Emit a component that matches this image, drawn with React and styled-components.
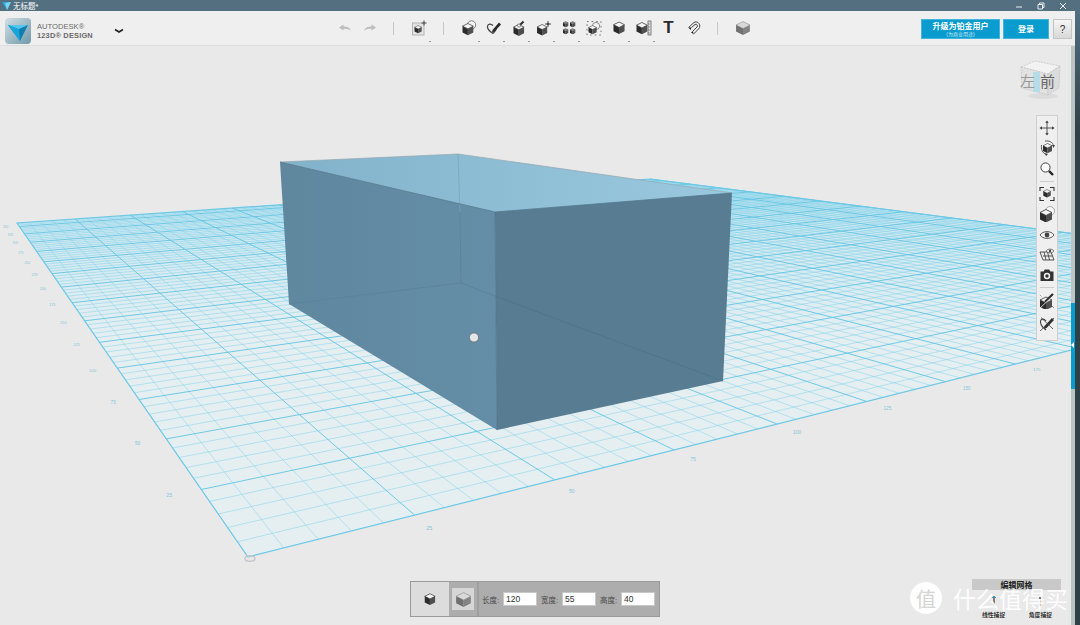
import React from "react";
import styled, { createGlobalStyle } from "styled-components";

const GlobalStyle = createGlobalStyle`
  html, body { margin: 0; padding: 0; overflow: hidden; }
  body { font-family: "Liberation Sans", "Noto Sans CJK SC", sans-serif; }
`;

const Shell = styled.div`
  width: 1080px;
  height: 625px;
  display: flex;
  flex-direction: column;
  background: #e9e9e9;
`;

const TitleBar = styled.div`
  height: 11px;
  flex: none;
  display: flex;
  align-items: center;
  background: #536f80;
  color: #fff;
  font-size: 7.5px;
`;

const TitleIcon = styled.svg`
  width: 9px;
  height: 8px;
  margin: 0 2px 0 2px;
`;

const WindowControls = styled.div`
  margin-left: auto;
  display: flex;
  align-items: center;
  gap: 14px;
  padding-right: 13px;
`;

const Body = styled.div`
  flex: 1;
  min-height: 0;
  display: flex;
`;

const Column = styled.div`
  flex: 1;
  min-width: 0;
  display: flex;
  flex-direction: column;
`;

const EdgeStrip = styled.div`
  width: 5px;
  flex: none;
  background: linear-gradient(#536f80 0, #2f4148 120px);
`;

const Header = styled.div`
  height: 34px;
  flex: none;
  display: flex;
  align-items: center;
  background: #efefef;
  border-bottom: 1px solid #dddddd;
`;

const Brand = styled.div`
  width: 332px;
  height: 100%;
  flex: none;
  box-sizing: border-box;
  padding: 5px 0 0 5px;
  display: flex;
  align-items: center;
  gap: 6px;
`;

const BrandText = styled.div`
  width: 71px;
  color: #6a6a6a;
  line-height: 9px;
`;

const BrandTop = styled.div`
  font-size: 7.6px;
`;

const BrandBottom = styled.div`
  font-size: 7.4px;
  font-weight: bold;
  letter-spacing: 0.2px;
`;

const Toolbar = styled.div`
  display: flex;
  align-items: center;
  height: 100%;
`;

const ToolSlot = styled.div`
  position: relative;
  width: 25px;
  height: 100%;
  display: flex;
  align-items: center;
  justify-content: center;

  ${({ $more }) =>
    $more &&
    `&::after {
      content: "";
      position: absolute;
      right: 1px;
      bottom: 3px;
      width: 2px;
      height: 1px;
      background: #9a9a9a;
    }`}
`;

const TextTool = styled.span`
  font-family: "Liberation Sans", sans-serif;
  font-weight: bold;
  font-size: 17px;
  color: #2b2b2b;
`;

const ToolDivider = styled.div`
  width: 1px;
  height: 13px;
  margin: 0 12.5px 0 11px;
  background: #c6c6c6;
`;

const AccountArea = styled.div`
  margin-left: auto;
  display: flex;
  align-items: center;
  gap: 3px;
  padding: 2px 3px 0 0;
`;

const BlueButton = styled.div`
  width: ${({ $w }) => $w}px;
  height: 20px;
  box-sizing: border-box;
  display: flex;
  flex-direction: column;
  align-items: center;
  justify-content: center;
  background: #0a9ccf;
  border: 1px solid #43b4dc;
  color: #fff;
  font-weight: bold;
  font-size: 8px;
  line-height: 9px;
`;

const SubLabel = styled.span`
  font-size: 5px;
  font-weight: normal;
  line-height: 6px;
  color: #cfeaf5;
`;

const HelpButton = styled.div`
  width: 19px;
  height: 20px;
  box-sizing: border-box;
  margin-left: 1px;
  display: flex;
  align-items: center;
  justify-content: center;
  background: linear-gradient(#f6f6f6, #d8d8d8);
  border: 1px solid #c4c4c4;
  color: #333;
  font-size: 10px;
`;

const Workspace = styled.div`
  flex: 1;
  min-height: 0;
  display: flex;
`;

const Viewport = styled.div`
  position: relative;
  flex: 1;
  min-width: 0;
  overflow: hidden;
  background: #e9e9e9;
`;

const Scene = styled.svg`
  display: block;
  width: 1071px;
  height: 579px;
`;

const PanelHandle = styled.div`
  width: 4px;
  flex: none;
  display: flex;
  flex-direction: column;
  background: #bcc3c5;
`;

const HandleBlue = styled.div`
  position: relative;
  margin-top: 257px;
  height: 86px;
  background: #0a9ccf;

  &::after {
    content: "";
    position: absolute;
    left: 0;
    top: 39px;
    border-style: solid;
    border-width: 3px 3px 3px 0;
    border-color: transparent #fff transparent transparent;
  }
`;

const ViewCube = styled.svg`
  position: absolute;
  left: 1017px;
  top: 12px;
  width: 46px;
  height: 46px;
`;

const NavBar = styled.div`
  position: absolute;
  left: 1036px;
  top: 69px;
  width: 22px;
  height: 226px;
  box-sizing: border-box;
  padding-top: 2px;
  display: flex;
  flex-direction: column;
  align-items: center;
  background: #efefef;
  border: 1px solid #cfcfcf;
`;

const NavSlot = styled.div`
  width: 20px;
  height: ${({ $h }) => $h || 20.3}px;
  flex: none;
  display: flex;
  align-items: center;
  justify-content: center;
`;

const NavDivider = styled.div`
  width: 14px;
  height: 1px;
  flex: none;
  margin: 2px 0;
  background: #cdcdcd;
`;

const DimensionPanel = styled.div`
  position: absolute;
  left: 410px;
  bottom: 8px;
  width: 250px;
  height: 36px;
  box-sizing: border-box;
  display: flex;
  align-items: center;
  background: #adadad;
  border: 1px solid #9a9a9a;
`;

const ModeCell = styled.div`
  width: 38px;
  height: 100%;
  flex: none;
  display: flex;
  align-items: center;
  justify-content: center;
  background: #dcdcdc;
`;

const ModeCellActive = styled.div`
  width: 22px;
  height: 22px;
  flex: none;
  margin: 0 3px;
  display: flex;
  align-items: center;
  justify-content: center;
  background: #d6d6d6;
`;

const PanelRule = styled.div`
  width: 2px;
  height: 100%;
  flex: none;
  margin-right: 3px;
  background: #9f9f9f;
`;

const FieldGroup = styled.div`
  display: flex;
  align-items: center;
  gap: 4px;
  margin-right: 4px;
`;

const FieldLabel = styled.span`
  font-size: 7.5px;
  width: 17px;
  color: #4a4a4a;
  white-space: nowrap;
`;

const FieldInput = styled.div`
  width: 34px;
  height: 14px;
  box-sizing: border-box;
  padding-left: 2px;
  display: flex;
  align-items: center;
  background: #fff;
  border: 1px solid #c8c8c8;
  color: #333;
  font-size: 8.5px;
`;

const GridPanel = styled.div`
  position: absolute;
  left: 972px;
  top: 533px;
  width: 89px;
  display: flex;
  flex-direction: column;
  align-items: center;
`;

const GridPanelTitle = styled.div`
  width: 100%;
  height: 11px;
  display: flex;
  align-items: center;
  justify-content: center;
  background: #c9c9c9;
  color: #222;
  font-size: 8px;
  font-weight: bold;
`;

const SnapRow = styled.div`
  width: 100%;
  display: flex;
  justify-content: space-between;
  margin-top: 5px;
  padding: 0 9px 0 10px;
  box-sizing: border-box;
`;

const SnapItem = styled.div`
  display: flex;
  flex-direction: column;
  align-items: center;
  gap: 3px;
  color: #333;
  font-size: 5.8px;
  font-weight: bold;
  white-space: nowrap;
`;

const Watermark = styled.div`
  position: absolute;
  left: 910px;
  top: 536px;
  display: flex;
  align-items: center;
  gap: 11px;
  color: rgba(255, 255, 255, 0.95);
`;

const WatermarkBadge = styled.div`
  width: 32px;
  height: 32px;
  border-radius: 50%;
  display: flex;
  align-items: center;
  justify-content: center;
  background: rgba(255, 255, 255, 0.94);
  color: #d4d4d4;
  font-size: 20px;
`;

const WatermarkText = styled.div`
  font-family: "Noto Sans CJK SC", sans-serif;
  font-size: 23px;
  line-height: 28px;
`;

// grid projection, corners measured off the picture
const P00 = [248, 557];
const P10 = [1378, 273];
const P11 = [650, 179];
const P01 = [17, 223];
const NX = 15;
const NY = 14.5;

const dx1 = P10[0] - P11[0];
const dy1 = P10[1] - P11[1];
const dx2 = P01[0] - P11[0];
const dy2 = P01[1] - P11[1];
const sx = P00[0] - P10[0] + P11[0] - P01[0];
const sy = P00[1] - P10[1] + P11[1] - P01[1];
const det = dx1 * dy2 - dx2 * dy1;
const G = (sx * dy2 - dx2 * sy) / det;
const H = (dx1 * sy - sx * dy1) / det;

const project = (u, v) => {
  const w = G * u + H * v + 1;
  const x = (P10[0] - P00[0] + G * P10[0]) * u + (P01[0] - P00[0] + H * P01[0]) * v + P00[0];
  const y = (P10[1] - P00[1] + G * P10[1]) * u + (P01[1] - P00[1] + H * P01[1]) * v + P00[1];
  return [x / w, y / w, w];
};

const seg = (a, b) => `M${a[0].toFixed(1)} ${a[1].toFixed(1)}L${b[0].toFixed(1)} ${b[1].toFixed(1)}`;

const buildGrid = () => {
  let minor = "";
  let major = "";
  for (let i = 1; i <= NX * 5; i++) {
    const u = i / (NX * 5);
    const d = seg(project(u, 0), project(u, 1));
    if (i % 5 === 0) major += d;
    else minor += d;
  }
  for (let j = 1; j <= Math.floor(NY * 5); j++) {
    const v = j / (NY * 5);
    const d = seg(project(0, v), project(1, v));
    if (j % 5 === 0) major += d;
    else minor += d;
  }
  return { minor, major };
};

const GRID = buildGrid();
const NEAR_LABELS = [1, 2, 3, 4, 5, 6, 7].map((t) => ({ t, p: project(t / NX, -0.013) }));
const LEFT_LABELS = Array.from({ length: 14 }, (_, k) => k + 1).map((t) => ({ t, p: project(-0.012, t / NY) }));

const GridFloor = () => (
  <g>
    <polygon points={[P00, P10, P11, P01].map((p) => p.join(",")).join(" ")} fill="url(#floorFill)" />
    <path d={GRID.minor} stroke="#7fd0e8" strokeWidth="0.8" strokeOpacity="0.62" fill="none" />
    <path d={GRID.major} stroke="#62c4e3" strokeWidth="1" strokeOpacity="0.9" fill="none" />
    <polygon
      points={[P00, P10, P11, P01].map((p) => p.join(",")).join(" ")}
      stroke="#6cc8e6"
      strokeWidth="1.2"
      fill="none"
    />
    <ellipse cx="250" cy="558.5" rx="5" ry="2.8" fill="none" stroke="#c3c7c9" strokeWidth="1.4" />
    {NEAR_LABELS.map(({ t, p }) => (
      <text key={t} x={p[0]} y={p[1] + 2} fontSize={5.6 / Math.sqrt(p[2])} fill="#82c5da" textAnchor="middle">
        {t * 25}
      </text>
    ))}
    {LEFT_LABELS.map(({ t, p }) => (
      <text key={t} x={p[0]} y={p[1] + 1} fontSize={5.6 / Math.sqrt(p[2])} fill="#82c5da" textAnchor="end">
        {t * 25}
      </text>
    ))}
  </g>
);

const Box = () => (
  <g>
    <polygon points="280,162 458,154 732,193 495,212" fill="url(#boxTop)" />
    <polygon points="280,162 495,212 497,430 289,304" fill="url(#boxLeft)" />
    <polygon points="495,212 732,193 723,381 497,430" fill="#587c91" />
    <path d="M458 154L460 212" stroke="#78a5bc" strokeWidth="0.8" fill="none" />
    <path d="M460 212L461 283M461 283L289 304M461 283L495 296" stroke="#5a8299" strokeWidth="0.8" fill="none" />
    <path d="M495 296L723 381" stroke="#4f7286" strokeWidth="0.8" fill="none" />
    <path d="M280 162L458 154L732 193" stroke="#93a6b0" strokeWidth="0.7" fill="none" />
    <path d="M280 162L495 212L732 193M495 212L497 430" stroke="#54778b" strokeWidth="0.8" fill="none" />
    <circle cx="474" cy="337.5" r="4.6" fill="#e3e7e9" stroke="#6f7376" strokeWidth="0.9" />
  </g>
);

// small isometric cube used by most of the tool icons, drawn in a 16 box
const CubeMark = ({ x = 0, y = 0, s = 1, top = "#f4f4f4", left = "#2b2b2b", right = "#4f4f4f" }) => (
  <g transform={`translate(${x} ${y}) scale(${s})`}>
    <polygon points="6,0 12,3 6,6 0,3" fill={top} stroke="#333" strokeWidth="0.8" />
    <polygon points="0,3 6,6 6,13 0,10" fill={left} />
    <polygon points="12,3 6,6 6,13 12,10" fill={right} />
  </g>
);

const Icon = ({ children, size = 16 }) => (
  <svg width={size} height={size} viewBox="0 0 16 16">
    {children}
  </svg>
);

const UndoIcon = ({ flip }) => (
  <Icon>
    <g transform={flip ? "translate(16 0) scale(-1 1)" : undefined}>
      <path d="M2 7.5L6.5 4.5V6.5C10 6.5 13 7.5 14 11C12.5 9 10 8.7 6.5 8.7V10.5Z" fill="#bdbdbd" />
    </g>
  </Icon>
);

const AddIcon = () => (
  <Icon>
    <rect x="1.5" y="3" width="11.5" height="12" fill="#e4e4e4" stroke="#b4b4b4" />
    <CubeMark x={3.5} y={5.5} s={0.6} />
    <path d="M13 0.5V5.5M10.5 3H15.5" stroke="#444" strokeWidth="1" />
  </Icon>
);

const PrimitiveIcon = () => (
  <Icon>
    <circle cx="10.5" cy="5" r="4.2" fill="#f4f4f4" stroke="#666" strokeWidth="0.8" />
    <CubeMark x={1.5} y={3.5} s={0.9} />
  </Icon>
);

const SketchIcon = () => (
  <Icon>
    <path d="M7 13.5C3 11 1 8.5 1.5 6C2 3.5 5 3.5 7 5.5" fill="none" stroke="#444" strokeWidth="1.2" />
    <path d="M7 13.5C8.5 12 10 10 10.5 8.5" fill="none" stroke="#444" strokeWidth="1.2" />
    <path d="M6.5 10L13 2.5L15 4.5L8.5 11.5L6 12.5Z" fill="#2b2b2b" />
  </Icon>
);

const ConstructIcon = () => (
  <Icon>
    <CubeMark x={2.5} y={4.5} s={0.88} />
    <path d="M8 6L12.5 1.5" stroke="#2b2b2b" strokeWidth="2" />
    <circle cx="8" cy="5.5" r="1.6" fill="#f4f4f4" stroke="#444" strokeWidth="0.6" />
  </Icon>
);

const ModifyIcon = () => (
  <Icon>
    <CubeMark x={1} y={4.5} s={0.85} />
    <path d="M12 1V7M9 4H15" stroke="#333" strokeWidth="0.9" />
    <circle cx="12" cy="4" r="1.1" fill="#333" />
  </Icon>
);

const PatternIcon = () => (
  <Icon>
    {[
      [2, 1.5],
      [9, 1.5],
      [2, 8.5],
      [9, 8.5],
    ].map(([x, y]) => (
      <CubeMark key={`${x}-${y}`} x={x} y={y} s={0.44} top="#8a8a8a" />
    ))}
  </Icon>
);

const GroupIcon = () => (
  <Icon>
    <rect x="1" y="1.5" width="14" height="13.5" fill="none" stroke="#555" strokeWidth="0.8" strokeDasharray="1.6 3" />
    <circle cx="10" cy="6" r="3.6" fill="#f4f4f4" stroke="#666" strokeWidth="0.7" />
    <CubeMark x={2.5} y={5.5} s={0.68} />
  </Icon>
);

const CombineIcon = () => (
  <Icon>
    <CubeMark x={2.5} y={2} s={0.92} />
  </Icon>
);

const MeasureIcon = () => (
  <Icon>
    <CubeMark x={0.5} y={2.5} s={0.9} />
    <rect x="12" y="1" width="3" height="14" fill="#e2e2e2" stroke="#555" strokeWidth="0.7" />
    <path d="M12 4H14M12 7H14M12 10H14M12 13H14" stroke="#555" strokeWidth="0.6" />
  </Icon>
);

const MagnetIcon = () => (
  <Icon>
    <path
      d="M2.5 7.5L8 2.5C10.5 0.5 15 3.5 13.5 7.5C13 9 9 12.5 7.5 14"
      fill="none"
      stroke="#444"
      strokeWidth="1"
    />
    <path d="M5.5 7.5L9 4.5C11 3.5 12 5.5 11 7L7 11" fill="none" stroke="#444" strokeWidth="1" />
    <path d="M2.5 7.5L5.5 7.5L4.5 10Z M7 11L7.5 14L5 12.5Z" fill="#222" />
  </Icon>
);

const MaterialIcon = ({ size = 16 }) => (
  <Icon size={size}>
    <polygon points="8,1.5 15,5 8,8.5 1,5" fill="#d9d9d9" stroke="#8c8c8c" strokeWidth="0.6" />
    <polygon points="1,5 8,8.5 8,15 1,11.5" fill="#777" />
    <polygon points="15,5 8,8.5 8,15 15,11.5" fill="#8f8f8f" />
    <path d="M2 7L8 10L14 7M2 9L8 12L14 9M2 11L8 14L14 11" stroke="#5f5f5f" strokeWidth="0.5" fill="none" />
  </Icon>
);

const MoveIcon = () => (
  <Icon>
    <path d="M8 1.5V14.5M1.5 8H14.5" stroke="#444" strokeWidth="0.9" />
    <path d="M8 0.5L6.3 3H9.7ZM8 15.5L6.3 13H9.7ZM0.5 8L3 6.3V9.7ZM15.5 8L13 6.3V9.7Z" fill="#444" />
  </Icon>
);

const OrbitIcon = () => (
  <Icon>
    <CubeMark x={4} y={3.5} s={0.75} />
    <path d="M2.5 5C2 9 3 13 8 15" fill="none" stroke="#555" strokeWidth="1" />
    <path d="M6 1C10 0.5 14 2 14.5 6" fill="none" stroke="#555" strokeWidth="1" />
    <path d="M13 5L16 5L14.5 8ZM6 13L9 14L7 16Z" fill="#444" />
  </Icon>
);

const ZoomIcon = () => (
  <Icon>
    <circle cx="6.5" cy="6.5" r="4.6" fill="#fafafa" stroke="#444" strokeWidth="1" />
    <path d="M10 10L14 14" stroke="#222" strokeWidth="2.4" />
  </Icon>
);

const FitIcon = () => (
  <Icon>
    <path d="M1 5V1.5H5M11 1.5H15V5M15 11V14.5H11M5 14.5H1V11" fill="none" stroke="#333" strokeWidth="1.1" />
    <CubeMark x={4.3} y={3.5} s={0.62} />
  </Icon>
);

const ShadedIcon = () => (
  <Icon>
    <circle cx="11" cy="5" r="4.5" fill="#fafafa" stroke="#888" strokeWidth="0.7" />
    <CubeMark x={1} y={3.5} />
  </Icon>
);

const EyeIcon = () => (
  <Icon>
    <path d="M1 8C4 3.5 12 3.5 15 8C12 12.5 4 12.5 1 8Z" fill="#f7f7f7" stroke="#555" strokeWidth="1" />
    <circle cx="8" cy="8" r="2.4" fill="#444" />
  </Icon>
);

const GridEyeIcon = () => (
  <Icon>
    <path d="M1 5H12L15 13H4ZM4 9H13.5M5 5L7 13M8.5 5L10.5 13" fill="none" stroke="#444" strokeWidth="0.9" />
    <path d="M7 4C9 1.5 13 1.5 15 4C13 6.5 9 6.5 7 4Z" fill="#f7f7f7" stroke="#555" strokeWidth="0.8" />
    <circle cx="11" cy="4" r="1.2" fill="#444" />
  </Icon>
);

const CameraIcon = () => (
  <Icon>
    <path d="M1.5 4.5H4.5L5.8 2.5H10.2L11.5 4.5H14.5V14H1.5Z" fill="#333" />
    <circle cx="8" cy="9" r="3.2" fill="#f2f2f2" />
    <circle cx="8" cy="9" r="1.7" fill="#333" />
  </Icon>
);

const HideSolidIcon = () => (
  <Icon>
    <CubeMark x={1} y={4} />
    <path d="M6 9L14 1" stroke="#2b2b2b" strokeWidth="2.4" />
    <path d="M1 15L15 2" stroke="#efefef" strokeWidth="0.8" />
    <path d="M1.5 2.5L3 4M13 13L15 15" stroke="#444" strokeWidth="0.9" strokeDasharray="1 1" />
  </Icon>
);

const HideSketchIcon = () => (
  <Icon>
    <path d="M7 14C3 11 1 8 1.5 5C2.3 2.5 5 2.5 7 5" fill="none" stroke="#444" strokeWidth="1.1" />
    <path d="M5.5 10L13 2L15 4L7.5 12L5 13Z" fill="#2b2b2b" />
    <path d="M1 15L15 2" stroke="#444" strokeWidth="0.8" />
    <path d="M2 1.5L14 13" stroke="#444" strokeWidth="0.8" />
  </Icon>
);

const TOOLS_MAIN = [
  { key: "primitive", icon: <PrimitiveIcon />, more: true },
  { key: "sketch", icon: <SketchIcon />, more: true },
  { key: "construct", icon: <ConstructIcon />, more: true },
  { key: "modify", icon: <ModifyIcon />, more: true },
  { key: "pattern", icon: <PatternIcon />, more: true },
  { key: "group", icon: <GroupIcon />, more: true },
  { key: "combine", icon: <CombineIcon />, more: true },
  { key: "measure", icon: <MeasureIcon />, more: true },
];

const App = () => {
  return (
    <Shell>
      <GlobalStyle />
      <TitleBar>
        <TitleIcon viewBox="0 0 9 8">
          <polygon points="0,0 9,0 5,8" fill="#29a9dc" />
          <polygon points="3,1 9,0 5,8" fill="#7fd3f0" />
        </TitleIcon>
        无标题*
        <WindowControls>
          <svg width="8" height="8" viewBox="0 0 8 8">
            <path d="M1 5H7" stroke="#e8eef0" strokeWidth="1" />
          </svg>
          <svg width="8" height="8" viewBox="0 0 8 8">
            <path d="M1 2.5H5.5V7H1ZM2.5 2.5V1H7V5.5H5.5" fill="none" stroke="#e8eef0" strokeWidth="1" />
          </svg>
          <svg width="8" height="8" viewBox="0 0 8 8">
            <path d="M1 1L7 7M7 1L1 7" stroke="#e8eef0" strokeWidth="1" />
          </svg>
        </WindowControls>
      </TitleBar>
      <Body>
        <Column>
          <Header>
            <Brand>
              <svg width="26" height="26" viewBox="0 0 26 26">
                <defs>
                  <linearGradient id="logoBg" x1="0" y1="0" x2="1" y2="1">
                    <stop offset="0" stopColor="#d2dfe4" />
                    <stop offset="1" stopColor="#6f98aa" />
                  </linearGradient>
                </defs>
                <rect width="26" height="26" rx="4" fill="url(#logoBg)" />
                <polygon points="3,7 23,7 15,23" fill="#0f7fae" />
                <polygon points="3,7 14,11 15,23" fill="#17a5dc" />
                <polygon points="3,7 23,7 14,11" fill="#57c6ee" />
              </svg>
              <BrandText>
                <BrandTop>AUTODESK®</BrandTop>
                <BrandBottom>123D® DESIGN</BrandBottom>
              </BrandText>
              <svg width="10" height="6" viewBox="0 0 10 6">
                <path d="M1 1.5L5 4L9 1.5" fill="none" stroke="#222" strokeWidth="1.6" />
              </svg>
            </Brand>
            <Toolbar>
              <ToolSlot>
                <UndoIcon />
              </ToolSlot>
              <ToolSlot>
                <UndoIcon flip />
              </ToolSlot>
              <ToolDivider />
              <ToolSlot $more>
                <AddIcon />
              </ToolSlot>
              <ToolDivider />
              {TOOLS_MAIN.map((tool) => (
                <ToolSlot key={tool.key} $more={tool.more}>
                  {tool.icon}
                </ToolSlot>
              ))}
              <ToolSlot>
                <TextTool>T</TextTool>
              </ToolSlot>
              <ToolSlot>
                <MagnetIcon />
              </ToolSlot>
              <ToolDivider />
              <ToolSlot>
                <MaterialIcon />
              </ToolSlot>
            </Toolbar>
            <AccountArea>
              <BlueButton $w={79}>
                升级为铂金用户
                <SubLabel>(为商业用途)</SubLabel>
              </BlueButton>
              <BlueButton $w={46}>登录</BlueButton>
              <HelpButton>?</HelpButton>
            </AccountArea>
          </Header>
          <Workspace>
            <Viewport>
              <Scene viewBox="0 46 1071 579">
                <defs>
                  <linearGradient id="floorFill" gradientUnits="userSpaceOnUse" x1="0" y1="200" x2="0" y2="340">
                    <stop offset="0" stopColor="#c9e7f1" />
                    <stop offset="1" stopColor="#e5eff2" />
                  </linearGradient>
                  <linearGradient id="boxTop" gradientUnits="userSpaceOnUse" x1="280" y1="0" x2="732" y2="0">
                    <stop offset="0" stopColor="#82b2ca" />
                    <stop offset="1" stopColor="#9ac9df" />
                  </linearGradient>
                  <linearGradient id="boxLeft" gradientUnits="userSpaceOnUse" x1="280" y1="0" x2="497" y2="0">
                    <stop offset="0" stopColor="#5f889f" />
                    <stop offset="1" stopColor="#648da7" />
                  </linearGradient>
                </defs>
                <GridFloor />
                <Box />
              </Scene>
              <ViewCube viewBox="0 0 46 46">
                <ellipse cx="26" cy="38" rx="15" ry="3" fill="#dcdcdc" />
                <polygon points="4,9 18,3 43,8 31,16" fill="#f2f2f2" stroke="#bbb" strokeWidth="0.6" strokeDasharray="2 1" />
                <polygon points="4,9 31,16 31,37 5,30" fill="#e2e2e2" stroke="#bbb" strokeWidth="0.6" strokeDasharray="2 1" />
                <polygon points="31,16 43,8 42,30 31,37" fill="#dcdcdc" stroke="#bbb" strokeWidth="0.6" strokeDasharray="2 1" />
                <rect x="16" y="14" width="7" height="20" fill="#b6dbe9" />
                <text x="3" y="29" fontSize="15" fill="#9a9a9a" fontFamily="Noto Sans CJK SC">
                  左
                </text>
                <text x="23" y="29" fontSize="15" fill="#666" fontFamily="Noto Sans CJK SC">
                  前
                </text>
              </ViewCube>
              <NavBar>
                <NavSlot><MoveIcon /></NavSlot>
                <NavSlot><OrbitIcon /></NavSlot>
                <NavSlot><ZoomIcon /></NavSlot>
                <NavDivider />
                <NavSlot><FitIcon /></NavSlot>
                <NavSlot><ShadedIcon /></NavSlot>
                <NavSlot><EyeIcon /></NavSlot>
                <NavSlot><GridEyeIcon /></NavSlot>
                <NavSlot><CameraIcon /></NavSlot>
                <NavDivider />
                <NavSlot $h={22}><HideSolidIcon /></NavSlot>
                <NavSlot $h={24}><HideSketchIcon /></NavSlot>
              </NavBar>
              <DimensionPanel>
                <ModeCell>
                  <Icon size={12}>
                    <CubeMark x={1} y={1} s={1.15} />
                  </Icon>
                </ModeCell>
                <ModeCellActive>
                  <MaterialIcon size={17} />
                </ModeCellActive>
                <PanelRule />
                <FieldGroup>
                  <FieldLabel>长度:</FieldLabel>
                  <FieldInput>120</FieldInput>
                </FieldGroup>
                <FieldGroup>
                  <FieldLabel>宽度:</FieldLabel>
                  <FieldInput>55</FieldInput>
                </FieldGroup>
                <FieldGroup>
                  <FieldLabel>高度:</FieldLabel>
                  <FieldInput>40</FieldInput>
                </FieldGroup>
              </DimensionPanel>
              <GridPanel>
                <GridPanelTitle>编辑网格</GridPanelTitle>
                <SnapRow>
                  <SnapItem>
                    <svg width="8" height="12" viewBox="0 0 8 12">
                      <path d="M4 1V11" stroke="#333" strokeWidth="1.2" />
                      <path d="M2 3L4 1L6 3" fill="none" stroke="#2a9fd0" strokeWidth="1" />
                    </svg>
                    线性捕捉
                  </SnapItem>
                  <SnapItem>
                    <svg width="8" height="12" viewBox="0 0 8 12">
                      <path d="M4 1V11" stroke="#333" strokeWidth="1.2" />
                    </svg>
                    角度捕捉
                  </SnapItem>
                </SnapRow>
              </GridPanel>
              <Watermark>
                <WatermarkBadge>值</WatermarkBadge>
                <WatermarkText>什么值得买</WatermarkText>
              </Watermark>
            </Viewport>
            <PanelHandle>
              <HandleBlue />
            </PanelHandle>
          </Workspace>
        </Column>
        <EdgeStrip />
      </Body>
    </Shell>
  );
};

export default App;
